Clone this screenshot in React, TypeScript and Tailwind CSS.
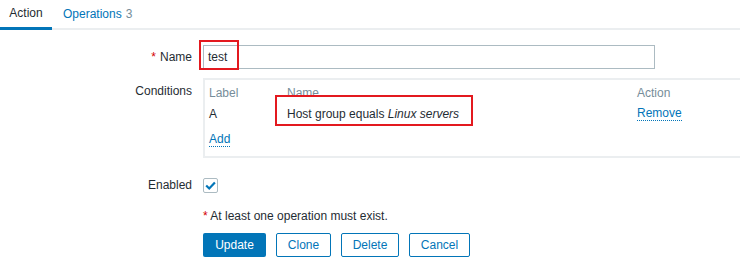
import * as React from 'react';

const BLUE = 'text-[#0275b8]';

function CheckIcon() {
  return (
    <svg viewBox="0 0 12 12" className="h-[11px] w-[11px]">
      <path d="M1.3 6 L4.6 9.2 L10.8 2.6" fill="none" stroke="#0275b8" strokeWidth="2.4" />
    </svg>
  );
}

function FormRow({ label, required, children, className, labelClass }: { label?: string; required?: boolean; children: React.ReactNode; className?: string; labelClass?: string }) {
  return (
    <div className={'flex ' + (className ?? '')}>
      <div className={'w-[193px] shrink-0 pr-[1px] text-right ' + (labelClass ?? '')}>
        {required && <span className="text-[#d40000] mr-[4px]">*</span>}
        {label}
      </div>
      <div className="ml-[10px] flex-1">{children}</div>
    </div>
  );
}

export default function App() {
  return (
    <div className="h-[269px] w-[740px] overflow-hidden bg-white text-[12px] text-[#1f2c33]" style={{ fontFamily: '"Liberation Sans", Arial, sans-serif' }}>
      {/* tabs */}
      <div className="flex h-[30px] border-b-2 border-[#ebeef0]">
        <div className="relative -mb-[2px] flex w-[52px] items-center justify-center border-b-[3px] border-[#0275b8] pb-[1px] text-[#1f2c33]">
          Action
        </div>
        <div className="flex items-center pb-[1px] pl-[11px]">
          <span className={BLUE}>Operations</span>
          <span className="ml-[4px] text-[#768d99]">3</span>
        </div>
      </div>

      <div className="pt-[15px]">
        <FormRow label="Name" required className="items-center">
          <div className="relative w-[452px]">
            <div className="flex h-[24px] items-center border border-[#acbbc2] px-[4px]">test</div>
            <div className="absolute -left-[4px] -top-[5px] h-[30px] w-[40px] border-2 border-[#e3191f]" />
          </div>
        </FormRow>

        <FormRow label="Conditions" className="mt-[10px]" labelClass="pt-[3px]">
          <div className="-mt-[1px] h-[80px] border-2 border-r-0 border-[#ebeef0] pl-[4px] pt-[4px]">
            <div className="flex h-[18px] items-center text-[#768d99]">
              <div className="w-[78px]">Label</div>
              <div className="w-[350px]">Name</div>
              <div>Action</div>
            </div>
            <div className="flex h-[24px] items-center">
              <div className="w-[78px]">A</div>
              <div className="relative w-[350px]">
                Host group equals <i>Linux servers</i>
                <div className="absolute -left-[12px] -top-[10px] h-[31px] w-[198px] border-2 border-[#e3191f]" />
              </div>
              <div className={BLUE + ' border-b border-dotted border-[#0275b8] leading-[13px]'}>Remove</div>
            </div>
            <div className="flex h-[26px] items-center pt-[2px]">
              <span className={BLUE + ' border-b border-dotted border-[#0275b8] leading-[13px]'}>Add</span>
            </div>
          </div>
        </FormRow>

        <FormRow label="Enabled" className="mt-[18px] items-center">
          <div className="flex h-[15px] w-[15px] items-center justify-center rounded-[2px] border border-[#acbbc2]">
            <CheckIcon />
          </div>
        </FormRow>

        <FormRow className="mt-[13px]">
          <div>
            <span className="text-[#d40000]">*</span> At least one operation must exist.
          </div>
        </FormRow>

        <FormRow className="mt-[8px]">
          <div className="flex gap-[10px]">
            <button className="h-[24px] w-[63px] rounded-[2px] bg-[#0275b8] text-white">Update</button>
            <button className="h-[24px] w-[55px] rounded-[2px] border border-[#0275b8] text-[#0275b8]">Clone</button>
            <button className="h-[24px] w-[58px] rounded-[2px] border border-[#0275b8] text-[#0275b8]">Delete</button>
            <button className="h-[24px] w-[61px] rounded-[2px] border border-[#0275b8] text-[#0275b8]">Cancel</button>
          </div>
        </FormRow>
      </div>
    </div>
  );
}
